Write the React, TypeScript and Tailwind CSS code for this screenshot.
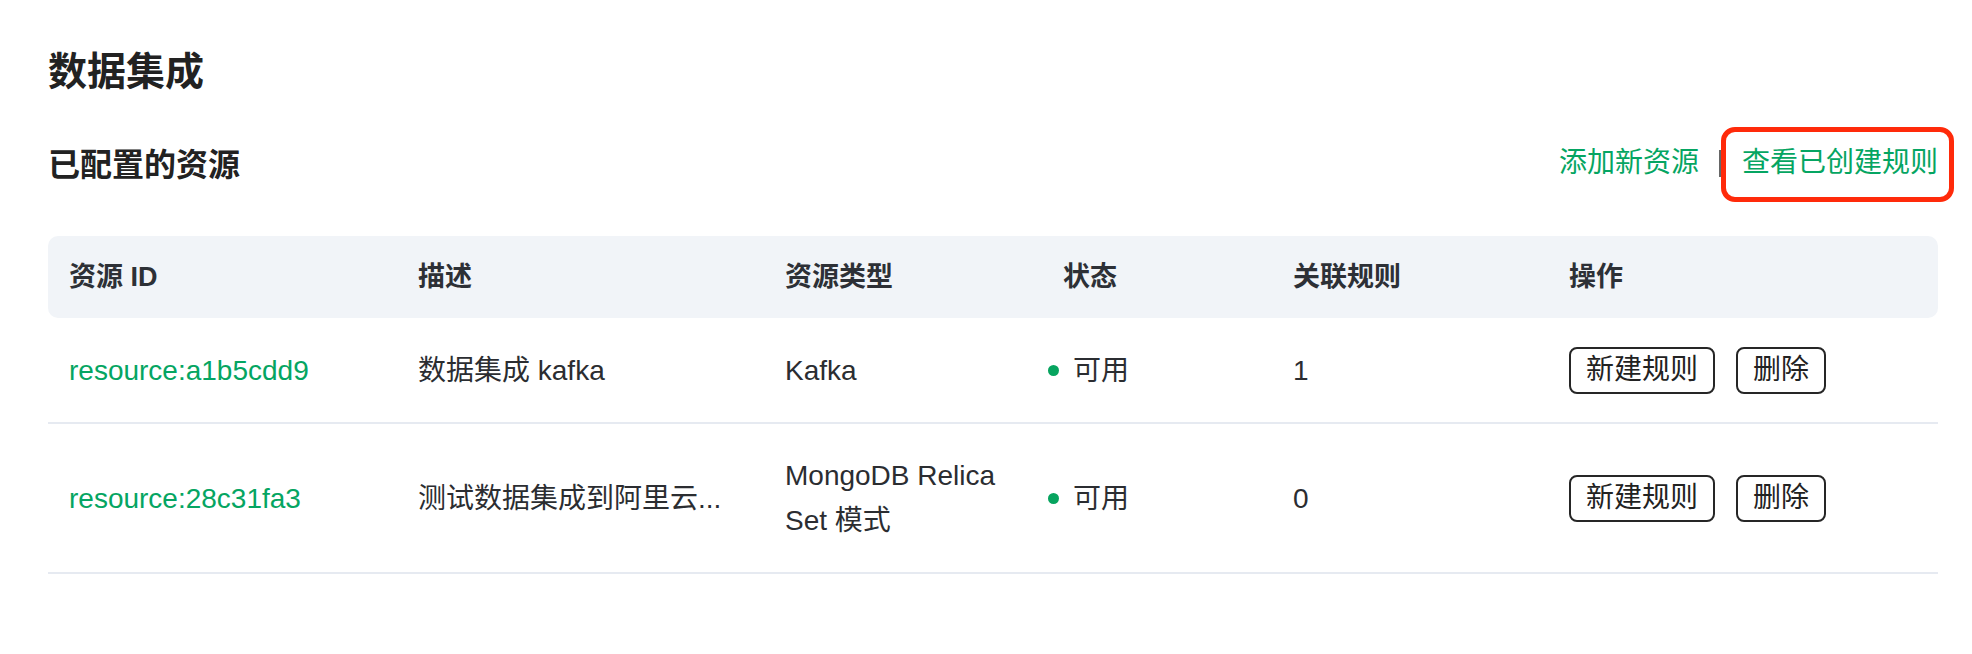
import React from 'react'

const resources = [
  {
    id: 'resource:a1b5cdd9',
    desc: '数据集成 kafka',
    type: ['Kafka'],
    status: '可用',
    rules: 1,
    h: 'h-[106px]',
  },
  {
    id: 'resource:28c31fa3',
    desc: '测试数据集成到阿里云...',
    type: ['MongoDB Relica', 'Set 模式'],
    status: '可用',
    rules: 0,
    h: 'h-[150px]',
  },
]

const grid =
  'grid grid-cols-[349px_367px_263px_245px_276px_1fr] items-center pl-[21px]'

function ActionButton({ label }: { label: string }) {
  return (
    <button
      type="button"
      className="h-[47px] px-[15px] border-2 border-[#262626] rounded-[8px] text-[28px] leading-[28px] text-[#222] bg-white"
    >
      {label}
    </button>
  )
}

export default function App() {
  return (
    <div
      className="min-h-[654px] bg-white pl-[48px] pr-[34px] pt-[48px] text-[#2b2d31]"
      style={{ fontFamily: '"Liberation Sans", "Noto Sans CJK SC", sans-serif' }}
    >
      <h1 className="text-[39px] leading-[48px] font-bold text-[#222]">
        数据集成
      </h1>

      {/* Section header with actions */}
      <div className="mt-[44px] h-[50px] flex items-center justify-between">
        <h2 className="text-[32px] leading-[40px] font-semibold text-[#222]">
          已配置的资源
        </h2>
        <div className="flex items-center -mt-[4px] text-[28px] leading-[28px] text-[#05a562]">
          <a className="cursor-pointer">添加新资源</a>
          <span className="mx-[20px] w-[2px] h-[27px] bg-[#666]" />
          <a className="relative ml-[1px] cursor-pointer">
            查看已创建规则
            <span className="absolute -left-[21px] -right-[16px] -top-[22px] -bottom-[25px] border-[5px] border-[#ff2a0a] rounded-[14px] pointer-events-none" />
          </a>
        </div>
      </div>

      {/* Table */}
      <div className="mt-[46px]">
        <div
          className={`${grid} h-[82px] rounded-[10px] bg-[#f1f4f8] text-[27px] leading-[34px] font-semibold text-[#2d3036]`}
        >
          <div>资源 ID</div>
          <div>描述</div>
          <div>资源类型</div>
          <div className="pl-[15px]">状态</div>
          <div>关联规则</div>
          <div>操作</div>
        </div>

        {resources.map((r) => (
          <div
            key={r.id}
            className={`${grid} ${r.h} border-b-2 border-[#e6eaf1] text-[28px] leading-[45px]`}
          >
            <div className="text-[#05a562]">{r.id}</div>
            <div>{r.desc}</div>
            <div>
              {r.type.map((t) => (
                <div key={t}>{t}</div>
              ))}
            </div>
            <div className="flex items-center gap-[14px]">
              <span className="w-[11px] h-[11px] rounded-full bg-[#07a45f]" />
              <span>{r.status}</span>
            </div>
            <div>{r.rules}</div>
            <div className="flex items-center gap-[21px]">
              <ActionButton label="新建规则" />
              <ActionButton label="删除" />
            </div>
          </div>
        ))}
      </div>
    </div>
  )
}
